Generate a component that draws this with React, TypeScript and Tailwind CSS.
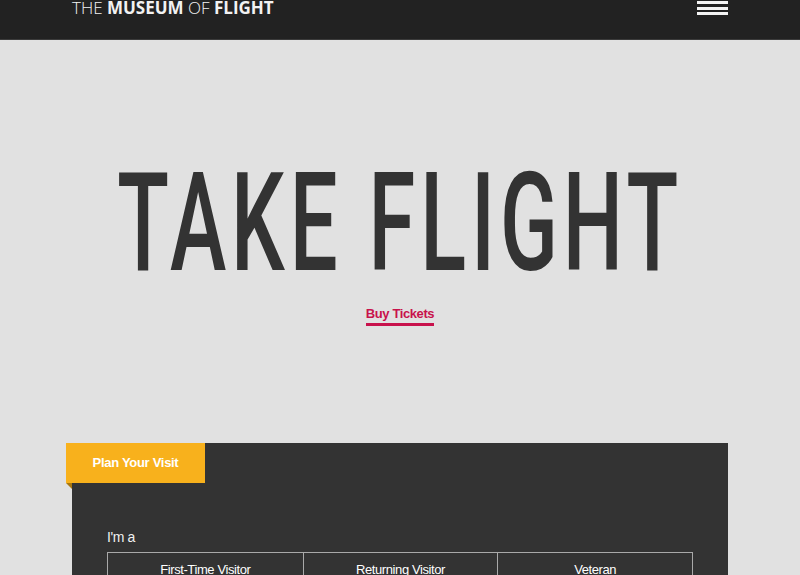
const visitorTypes = ['First-Time Visitor', 'Returning Visitor', 'Veteran'];

const App = () => {
    return (
        <div className="min-h-[575px] overflow-hidden bg-[#e1e1e1]">
            {/* top bar */}
            <header className="h-10 bg-[#222222] border-b border-[#3b3b3b]">
                <div className="mx-[72px] flex items-start justify-between">
                    <a
                        href="#"
                        className="-mt-px text-[17px] leading-none text-[#f2f2f2] font-['Open_Sans',sans-serif] whitespace-nowrap"
                    >
                        <span className="font-light">THE </span>
                        <span className="font-bold">MUSEUM </span>
                        <span className="font-light">OF </span>
                        <span className="font-bold">FLIGHT</span>
                    </a>
                    <button className="mt-px flex w-[31px] flex-col gap-[2.5px]" aria-label="Menu">
                        <span className="h-[3px] w-full bg-[#f4f4f4]" />
                        <span className="h-[3px] w-full bg-[#f4f4f4]" />
                        <span className="h-[3px] w-full bg-[#f4f4f4]" />
                    </button>
                </div>
            </header>

            {/* hero */}
            <section className="flex flex-col items-center pt-[114px]">
                <h1 className="flex h-[138px] w-full justify-center whitespace-nowrap text-[138px] font-medium leading-none tracking-[8px] text-[#333333] font-['Roboto',sans-serif]">
                    <span className="inline-block shrink-0 scale-x-[0.615]">TAKE FLIGHT</span>
                </h1>
                <a
                    href="#"
                    className="mt-[15px] border-b-[3px] border-[#c8124c] pb-[3px] text-[13px] font-bold leading-none tracking-[-0.4px] text-[#c8124c] font-['Liberation_Sans',Arial,sans-serif]"
                >
                    Buy Tickets
                </a>
            </section>

            {/* plan your visit card */}
            <section className="relative mx-[72px] mt-[117px] bg-[#333333] px-[35px] pt-[87px] pb-10 font-['Liberation_Sans',Arial,sans-serif]">
                <div className="absolute -left-[6px] top-0 flex h-10 w-[139px] items-center justify-center bg-[#f8b11c] text-[13px] font-bold tracking-[-0.3px] text-white">
                    Plan Your Visit
                    <span className="absolute left-0 top-full h-0 w-0 border-l-[6px] border-t-[6px] border-l-transparent border-t-[#a8770f]" />
                </div>
                <p className="text-[14px] leading-none tracking-[-0.4px] text-[#f0f0f0]">I'm a</p>
                <div className="mt-2 grid grid-cols-3 border border-[#a9a9a9]">
                    {visitorTypes.map((label, i) => (
                        <button
                            key={label}
                            className={`h-10 pb-4 pt-2 text-center text-[13px] leading-none tracking-[-0.4px] text-white ${i > 0 ? 'border-l border-[#a9a9a9]' : ''}`}
                        >
                            {label}
                        </button>
                    ))}
                </div>
            </section>
        </div>
    );
};

export default App;
